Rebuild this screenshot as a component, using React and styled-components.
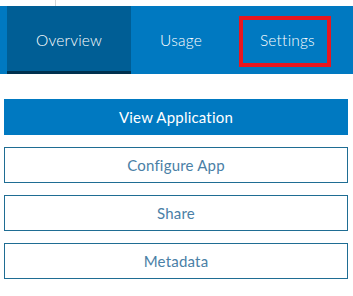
import React from "react";
import styled, { createGlobalStyle } from "styled-components";

const Global = createGlobalStyle`
  html, body { margin: 0; padding: 0; background: #fff; }
  body { font-family: Lato, "Noto Sans", "Liberation Sans", sans-serif; }
`;

const Page = styled.div`
  width: 353px;
  height: 296px;
  background: #fff;
  display: flex;
  flex-direction: column;
`;

const TopStrip = styled.div`
  height: 6px;
  display: flex;
`;

const TopCell = styled.div`
  width: 55px;
  border-right: 1px solid #d6d6d6;
`;

const Nav = styled.nav`
  height: 68px;
  background: #0079c1;
  display: flex;
  padding-left: 7px;
`;

const Tab = styled.div`
  position: relative;
  display: flex;
  align-items: center;
  padding: 0 29px;
  color: #fff;
  font-size: 15.5px;
  font-weight: 300;
  letter-spacing: 0.2px;
  background: ${(p) => (p.$active ? "#005e95" : "transparent")};
  box-shadow: ${(p) => (p.$active ? "inset 0 -3px 0 #00314f" : "none")};
`;

const Highlight = styled.div`
  position: absolute;
  left: 8px;
  top: 10px;
  width: 92px;
  height: 51px;
  box-sizing: border-box;
  border: 4px solid #e8161f;
`;

const Actions = styled.div`
  display: flex;
  flex-direction: column;
  gap: 12px;
  padding: 25px 5px 0 4px;
`;

const Button = styled.div`
  height: 36px;
  box-sizing: border-box;
  display: flex;
  align-items: center;
  justify-content: center;
  font-size: 15px;
  font-weight: 400;
  letter-spacing: 0.2px;
  background: ${(p) => (p.$primary ? "#0079c1" : "#fff")};
  color: ${(p) => (p.$primary ? "#fff" : "#4a80a6")};
  border: 1px solid ${(p) => (p.$primary ? "#0079c1" : "#1f6d93")};
`;

export default function App() {
  return (
    <Page>
      <Global />
      <TopStrip>
        <TopCell />
      </TopStrip>
      <Nav>
        <Tab $active>Overview</Tab>
        <Tab>Usage</Tab>
        <Tab>
          Settings
          <Highlight />
        </Tab>
      </Nav>
      <Actions>
        <Button $primary>View Application</Button>
        <Button>Configure App</Button>
        <Button>Share</Button>
        <Button>Metadata</Button>
      </Actions>
    </Page>
  );
}
